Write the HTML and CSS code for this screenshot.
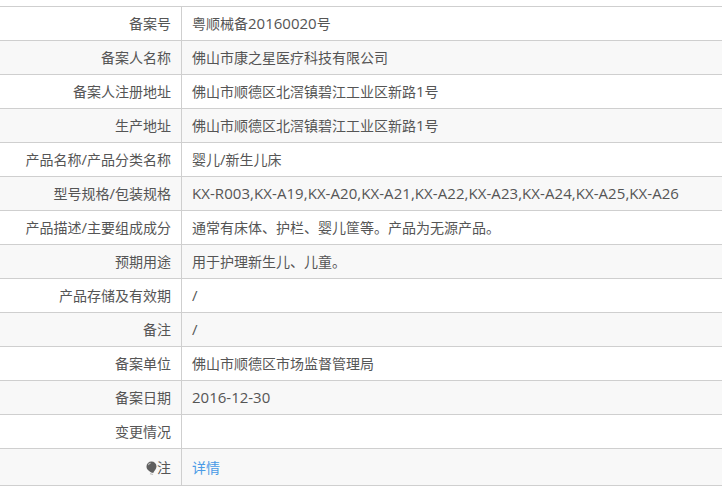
FILE: index.html
```html
<!DOCTYPE html>
<html lang="zh-CN">
<head>
<meta charset="utf-8">
<title>备案信息</title>
<link rel="stylesheet" href="styles.css">
</head>
<body>
<table class="record">
<tbody>
<tr><th>备案号</th><td>粤顺械备<span class="lat">20160020</span>号</td></tr>
<tr><th>备案人名称</th><td>佛山市康之星医疗科技有限公司</td></tr>
<tr><th>备案人注册地址</th><td>佛山市顺德区北滘镇碧江工业区新路<span class="lat">1</span>号</td></tr>
<tr><th>生产地址</th><td>佛山市顺德区北滘镇碧江工业区新路<span class="lat">1</span>号</td></tr>
<tr><th>产品名称<span class="lat">/</span>产品分类名称</th><td>婴儿<span class="lat">/</span>新生儿床</td></tr>
<tr><th>型号规格<span class="lat">/</span>包装规格</th><td><span class="lat models">KX-R003,KX-A19,KX-A20,KX-A21,KX-A22,KX-A23,KX-A24,KX-A25,KX-A26</span></td></tr>
<tr><th>产品描述<span class="lat">/</span>主要组成成分</th><td>通常有床体、护栏、婴儿筐等。产品为无源产品。</td></tr>
<tr><th>预期用途</th><td>用于护理新生儿、儿童。</td></tr>
<tr><th>产品存储及有效期</th><td><span class="lat">/</span></td></tr>
<tr><th>备注</th><td><span class="lat">/</span></td></tr>
<tr><th>备案单位</th><td>佛山市顺德区市场监督管理局</td></tr>
<tr><th>备案日期</th><td><span class="lat">2016-12-30</span></td></tr>
<tr><th>变更情况</th><td></td></tr>
<tr><th><svg class="bulb" width="12" height="14" viewBox="0 0 12 14" aria-hidden="true"><path d="M6.500 .5a5 5 0 0 1 5 5c0 2.800-2.500 4.200-3.300 6.500-.5-.3-1.300-.3-2-.6C4.500 10 1.500 9 1.500 5.500a5 5 0 0 1 5-5z" fill="#5f5f5f"/><path d="M3.300 4.200C3.700 3 4.600 2.300 5.600 2.100" fill="none" stroke="#b5b5b5" stroke-width="1.100"/><path d="M5 12.600l3 .9" stroke="#c4c4c4" stroke-width="1.200"/></svg>注</th><td><a class="link" href="#">详情</a></td></tr>
</tbody>
</table>
</body>
</html>
```
FILE: styles.css
```css
html, body {
  margin: 0;
  padding: 0;
  background: #fff;
}
body {
  padding-top: 6px;
  font-family: "Open Sans", "Noto Sans CJK SC", sans-serif;
  font-size: 14px;
  color: #555;
}
.record {
  width: 722px;
  border-collapse: collapse;
  table-layout: fixed;
  border-top: 1px solid #cfcfcf;
}
.record tr {
  height: 34px;
  border-bottom: 1px solid #cfcfcf;
}
.record tr:nth-child(even) {
  background: #f8f8f8;
}
.record tr:last-child {
  height: 37px;
}
.record th {
  width: 171px;
  padding: 0 10px 2px 0;
  text-align: right;
  font-weight: normal;
  border-right: 1px solid #cfcfcf;
}
.record td {
  padding: 0 0 2px 10px;
}
.record tr:last-child td,
.record tr:last-child th {
  padding-bottom: 0;
}
.lat {
  font-size: 15px;
}
.models {
  letter-spacing: .06px;
}
.bulb {
  vertical-align: -2px;
}
.link {
  color: #4a9be6;
  text-decoration: none;
}
```
